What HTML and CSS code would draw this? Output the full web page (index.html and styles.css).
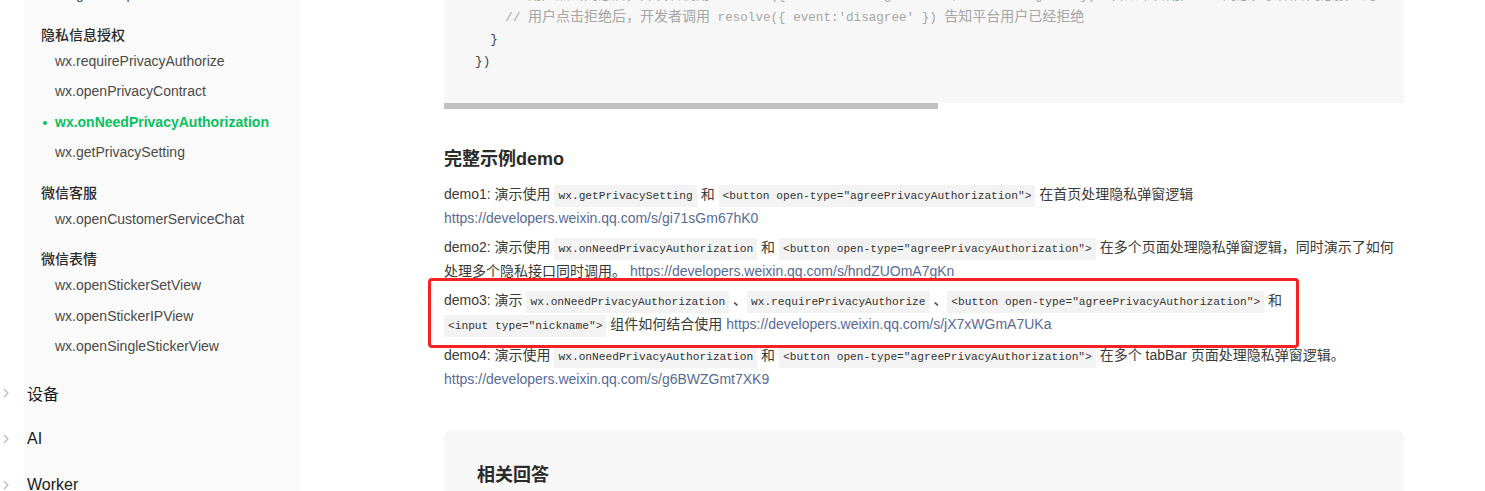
FILE: index.html
```html
<!DOCTYPE html>
<html lang="zh-CN">
<head>
<meta charset="utf-8">
<title>wx.onNeedPrivacyAuthorization</title>
<link rel="stylesheet" href="styles.css">
</head>
<body>
<div class="page">
  <aside class="sidebar">
    <nav class="nav">
      <div class="sub">
        <div class="group">
          <a class="item">wx.getGroupEnterInfo</a>
        </div>
        <div class="group">
          <div class="group-title">隐私信息授权</div>
          <a class="item">wx.requirePrivacyAuthorize</a>
          <a class="item">wx.openPrivacyContract</a>
          <a class="item active">wx.onNeedPrivacyAuthorization</a>
          <a class="item">wx.getPrivacySetting</a>
        </div>
        <div class="group">
          <div class="group-title">微信客服</div>
          <a class="item">wx.openCustomerServiceChat</a>
        </div>
        <div class="group">
          <div class="group-title">微信表情</div>
          <a class="item">wx.openStickerSetView</a>
          <a class="item">wx.openStickerIPView</a>
          <a class="item">wx.openSingleStickerView</a>
        </div>
      </div>
      <div class="top"><svg class="chev" viewBox="0 0 6 10"><polyline points="1,1 5,5 1,9"/></svg>设备</div>
      <div class="top"><svg class="chev" viewBox="0 0 6 10"><polyline points="1,1 5,5 1,9"/></svg>AI</div>
      <div class="top"><svg class="chev" viewBox="0 0 6 10"><polyline points="1,1 5,5 1,9"/></svg>Worker</div>
    </nav>
  </aside>
  <main class="main">
    <article class="article">
      <div class="code-wrap">
        <div class="code">
          <div class="ln cm">      // <span class="zh">用户点击同意后，开发者调用</span> resolve({ buttonId: 'agree-btn', event: 'agree' })  <span class="zh">告知平台用户已经同意，参数传同意按钮的</span>id</div>
          <div class="ln cm">      // <span class="zh">用户点击拒绝后，开发者调用</span> resolve({ event:'disagree' }) <span class="zh">告知平台用户已经拒绝</span></div>
          <div class="ln">    }</div>
          <div class="ln">  })</div>
        </div>
      </div>
      <div class="scrollbar"><div class="thumb"></div></div>

      <h3 class="h3">完整示例demo</h3>
      <p class="para">demo1: 演示使用 <code>wx.getPrivacySetting</code> 和 <code>&lt;button open-type="agreePrivacyAuthorization"&gt;</code> 在首页处理隐私弹窗逻辑<br><a class="link">https://developers.weixin.qq.com/s/gi71sGm67hK0</a></p>
      <p class="para">demo2: 演示使用 <code>wx.onNeedPrivacyAuthorization</code> 和 <code>&lt;button open-type="agreePrivacyAuthorization"&gt;</code> 在多个页面处理隐私弹窗逻辑，同时演示了如何<br>处理多个隐私接口同时调用。 <a class="link">https://developers.weixin.qq.com/s/hndZUOmA7gKn</a></p>
      <p class="para para-tight marked">demo3: 演示 <code>wx.onNeedPrivacyAuthorization</code> <span class="punct">、</span> <code>wx.requirePrivacyAuthorize</code> <span class="punct">、</span> <code>&lt;button open-type="agreePrivacyAuthorization"&gt;</code> 和<br><code>&lt;input type="nickname"&gt;</code> 组件如何结合使用 <a class="link">https://developers.weixin.qq.com/s/jX7xWGmA7UKa</a><span class="redbox"></span></p>
      <p class="para">demo4: 演示使用 <code>wx.onNeedPrivacyAuthorization</code> 和 <code>&lt;button open-type="agreePrivacyAuthorization"&gt;</code> 在多个 tabBar 页面处理隐私弹窗逻辑。<br><a class="link">https://developers.weixin.qq.com/s/g6BWZGmt7XK9</a></p>

      <section class="card">
        <h3 class="card-title">相关回答</h3>
      </section>
    </article>
  </main>
</div>
</body>
</html>
```

FILE: styles.css
```css
* { box-sizing: border-box; }
html, body { margin: 0; padding: 0; background: #fff; }
body {
  font-family: "Liberation Sans", "Noto Sans CJK SC", sans-serif;
  font-size: 14px;
  color: #333;
  overflow: hidden;
}
.page {
  display: flex;
  align-items: flex-start;
  height: 491px;
  overflow: hidden;
}

/* ---------- sidebar ---------- */
.sidebar {
  width: 300px;
  flex: none;
  padding-left: 24px;
  height: 491px;
}
.nav {
  background: #fafafa;
  height: 600px;
  margin-top: -21px;
}
.sub { margin-bottom: 8.5px; }
.group { display: flex; flex-direction: column; }
.group-title {
  padding: 15px 0 1px 17px;
  line-height: 20px;
  font-size: 14px;
  font-weight: 500;
  color: #2b2b2b;
}
.item {
  display: block;
  padding: 5px 0 5px 31px;
  line-height: 20.5px;
  font-size: 14px;
  color: #4a4a4a;
  white-space: nowrap;
}
.item.active {
  color: #07c160;
  font-weight: 700;
  position: relative;
}
.item.active::before {
  content: "";
  position: absolute;
  left: 19px;
  top: 14px;
  width: 4px;
  height: 4px;
  border-radius: 50%;
  background: #07c160;
}
.top {
  display: flex;
  align-items: center;
  height: 46px;
  padding-left: 3px;
  font-size: 16px;
  color: #1a1a1a;
}
.chev {
  width: 6px;
  height: 10px;
  margin-left: -24px;
  margin-right: 18px;
  flex: none;
}
.chev polyline {
  fill: none;
  stroke: #b5b5b5;
  stroke-width: 1.1;
}

/* ---------- main ---------- */
.main {
  flex: 1;
  padding-left: 144px;
}
.article { width: 960px; }

.code-wrap {
  background: #f7f7f7;
  margin-top: -15px;
  overflow: hidden;
}
.code {
  padding: 0 0 30px 16px;
  font-family: "Liberation Mono", "Noto Sans CJK SC", monospace;
  font-size: 12.6px;
  color: #444;
}
.ln {
  height: 22px;
  line-height: 22px;
  white-space: pre;
}
.cm { color: #a6a6a6; }
.zh {
  font-family: "Noto Sans CJK SC", sans-serif;
  font-size: 14px;
  line-height: 1;
}
.scrollbar { height: 6px; }
.thumb {
  width: 494px;
  height: 6px;
  background: #c1c1c1;
}

.h3 {
  margin: 37px 0 9.5px;
  font-size: 18px;
  line-height: 26px;
  font-weight: 600;
  color: #2b2b2b;
}
.para {
  margin: 0 0 4px;
  line-height: 24.5px;
  font-size: 14px;
  color: #3a3a3a;
}
.para-tight { margin-bottom: 6px; }
.para code {
  font-family: "Liberation Mono", monospace;
  font-size: 11.2px;
  line-height: 1;
  background: #f3f3f3;
  color: #333;
  padding: 5px 4px;
  white-space: nowrap;
}
.punct { margin-right: -4px; }
.link { color: #576b95; text-decoration: none; }
.marked { position: relative; }
.redbox {
  position: absolute;
  left: -16px;
  top: -9.5px;
  width: 871px;
  height: 70px;
  border: 3px solid #f42222;
  border-radius: 4px;
  pointer-events: none;
}

.card {
  margin-top: 38px;
  background: #f7f7f7;
  border-radius: 8px;
  padding: 32px 33px 40px;
}
.card-title {
  margin: 0;
  font-size: 18px;
  line-height: 26px;
  font-weight: 600;
  color: #2b2b2b;
}
```
